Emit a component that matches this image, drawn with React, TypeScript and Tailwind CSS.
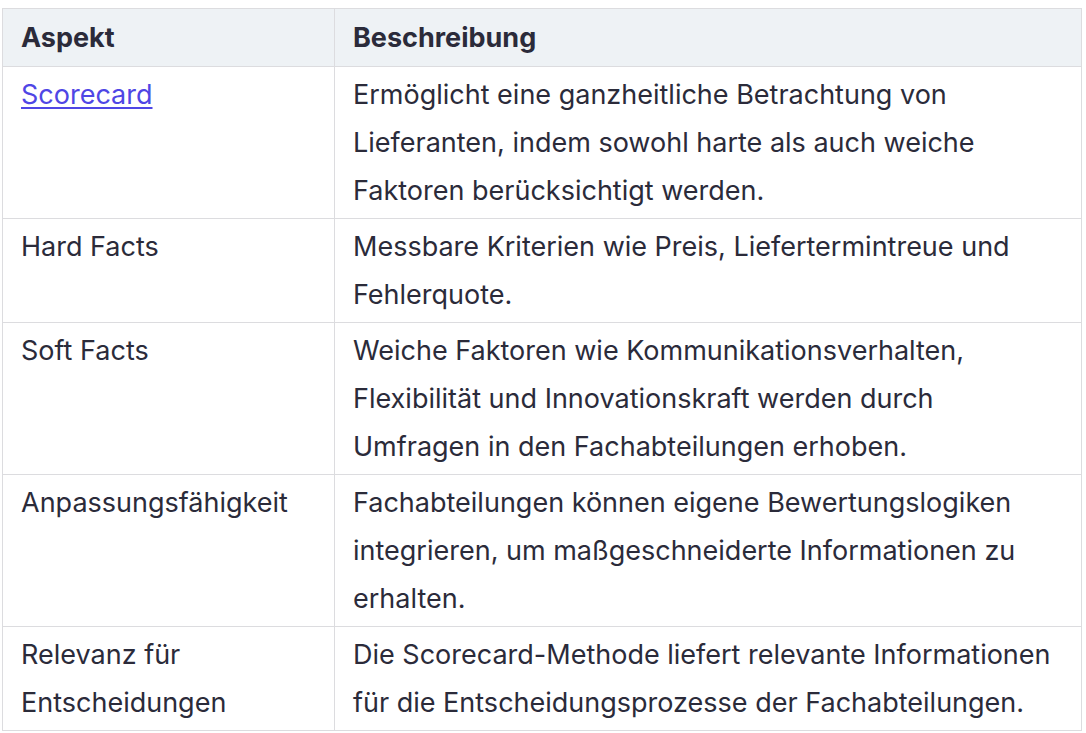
export default function App() {
  const rows = [
    {
      aspect: "Scorecard",
      link: true,
      text: "Ermöglicht eine ganzheitliche Betrachtung von Lieferanten, indem sowohl harte als auch weiche Faktoren berücksichtigt werden.",
    },
    {
      aspect: "Hard Facts",
      text: "Messbare Kriterien wie Preis, Liefertermintreue und Fehlerquote.",
    },
    {
      aspect: "Soft Facts",
      text: "Weiche Faktoren wie Kommunikationsverhalten, Flexibilität und Innovationskraft werden durch Umfragen in den Fachabteilungen erhoben.",
    },
    {
      aspect: "Anpassungsfähigkeit",
      text: "Fachabteilungen können eigene Bewertungslogiken integrieren, um maßgeschneiderte Informationen zu erhalten.",
    },
    {
      aspect: "Relevanz für Entscheidungen",
      text: "Die Scorecard-Methode liefert relevante Informationen für die Entscheidungsprozesse der Fachabteilungen.",
    },
  ]

  return (
    <div className="min-h-screen bg-white pl-[2px] pt-2 font-['Inter',sans-serif] text-[#2b2b3a]">
      <table className="w-[1080px] border-collapse text-left text-[27px] leading-[48px]">
        <thead>
          <tr className="bg-[#eef2f5]">
            <th className="w-[332px] border border-[#dcdcdf] px-[18px] pt-[5px] pb-[4px] font-bold">Aspekt</th>
            <th className="border border-[#dcdcdf] px-[18px] pt-[5px] pb-[4px] font-bold">Beschreibung</th>
          </tr>
        </thead>
        <tbody>
          {rows.map((row) => (
            <tr key={row.aspect}>
              <td className="border border-[#dcdcdf] px-[18px] pt-[4px] pb-[3px] align-top">
                {row.link ? (
                  <a href="#" className="text-[#4f46e5] underline underline-offset-[3px]">
                    {row.aspect}
                  </a>
                ) : (
                  row.aspect
                )}
              </td>
              <td className="border border-[#dcdcdf] px-[18px] pt-[4px] pb-[3px] align-top">{row.text}</td>
            </tr>
          ))}
        </tbody>
      </table>
    </div>
  )
}
